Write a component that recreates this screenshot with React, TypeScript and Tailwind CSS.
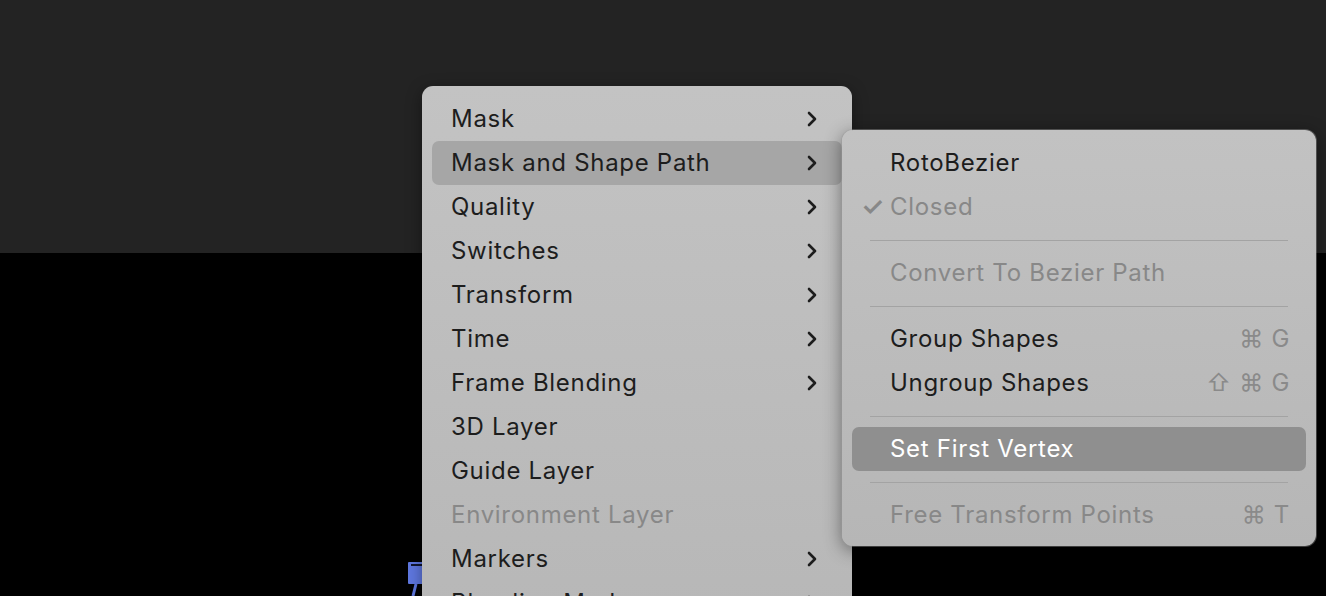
import { ChevronRight } from "lucide-react";

type Item = { label: string; sub?: boolean; disabled?: boolean; active?: boolean };

const mainItems: Item[] = [
  { label: "Mask", sub: true },
  { label: "Mask and Shape Path", sub: true, active: true },
  { label: "Quality", sub: true },
  { label: "Switches", sub: true },
  { label: "Transform", sub: true },
  { label: "Time", sub: true },
  { label: "Frame Blending", sub: true },
  { label: "3D Layer" },
  { label: "Guide Layer" },
  { label: "Environment Layer", disabled: true },
  { label: "Markers", sub: true },
  { label: "Blending Mode", sub: true },
];

const font = { fontFamily: "Inter, 'Noto Sans', sans-serif" };

function Sep() {
  return (
    <div className="flex h-[22px] items-center px-[28px]">
      <div className="h-px w-full bg-[#a3a3a3]" />
    </div>
  );
}

function SubRow({
  label,
  check,
  disabled,
  active,
  shortcut,
}: {
  label: string;
  check?: boolean;
  disabled?: boolean;
  active?: boolean;
  shortcut?: string;
}) {
  const color = active ? "text-white" : disabled ? "text-[#888888]" : "text-[#1d1d1d]";
  return (
    <div
      className={`mx-[10px] flex h-[44px] items-center rounded-[7px] pr-[16px] ${
        active ? "bg-[#8f8f8f]" : ""
      } ${color}`}
    >
      <span className="w-[38px] pl-[9px] text-[26px] font-semibold leading-none text-[#888888]">
        {check ? "✓" : ""}
      </span>
      <span className="flex-1">{label}</span>
      {shortcut && <span className="whitespace-pre text-[#8a8a8a]">{shortcut}</span>}
    </div>
  );
}

export default function App() {
  return (
    <div className="relative h-[596px] w-[1326px] overflow-hidden bg-black" style={font}>
      <div className="h-[253px] bg-[#232323]" />

      {/* marker on timeline */}
      <svg className="absolute left-[405px] top-[560px]" width="20" height="36" viewBox="0 0 20 36">
        <rect x="3" y="2" width="16" height="22" rx="1" fill="#5f78e0" />
        <rect x="6" y="4" width="12" height="2" fill="#10162e" />
        <path d="M11 24 L8 36" stroke="#5f78e0" strokeWidth="3" />
      </svg>

      {/* main context menu */}
      <div className="absolute left-[422px] top-[86px] w-[430px] rounded-[11px] bg-gradient-to-b from-[#c3c3c3] to-[#b7b7b7] pt-[11px] text-[24px] tracking-[0.7px] text-[#1d1d1d] shadow-[0_4px_16px_rgba(0,0,0,0.4)]">
        {mainItems.map((it) => (
          <div
            key={it.label}
            className={`mx-[10px] flex h-[44px] items-center rounded-[7px] pl-[19px] pr-[18px] ${
              it.active ? "bg-[#a6a6a6]" : ""
            } ${it.disabled ? "text-[#888888]" : ""}`}
          >
            <span className="flex-1">{it.label}</span>
            {it.sub && <ChevronRight size={24} strokeWidth={2.6} className="text-[#1d1d1d]" />}
          </div>
        ))}
      </div>

      {/* submenu */}
      <div className="absolute left-[842px] top-[130px] w-[474px] rounded-[11px] bg-gradient-to-b from-[#c2c2c2] to-[#b6b6b6] pb-[9px] pt-[11px] text-[24px] tracking-[0.7px] shadow-[0_4px_18px_rgba(0,0,0,0.45)] ring-1 ring-[#9a9a9a]/40">
        <SubRow label="RotoBezier" />
        <SubRow label="Closed" check disabled />
        <Sep />
        <SubRow label="Convert To Bezier Path" disabled />
        <Sep />
        <SubRow label="Group Shapes" shortcut="⌘ G" />
        <SubRow label="Ungroup Shapes" shortcut="⇧ ⌘ G" />
        <Sep />
        <SubRow label="Set First Vertex" active />
        <Sep />
        <SubRow label="Free Transform Points" disabled shortcut="⌘ T" />
      </div>
    </div>
  );
}
